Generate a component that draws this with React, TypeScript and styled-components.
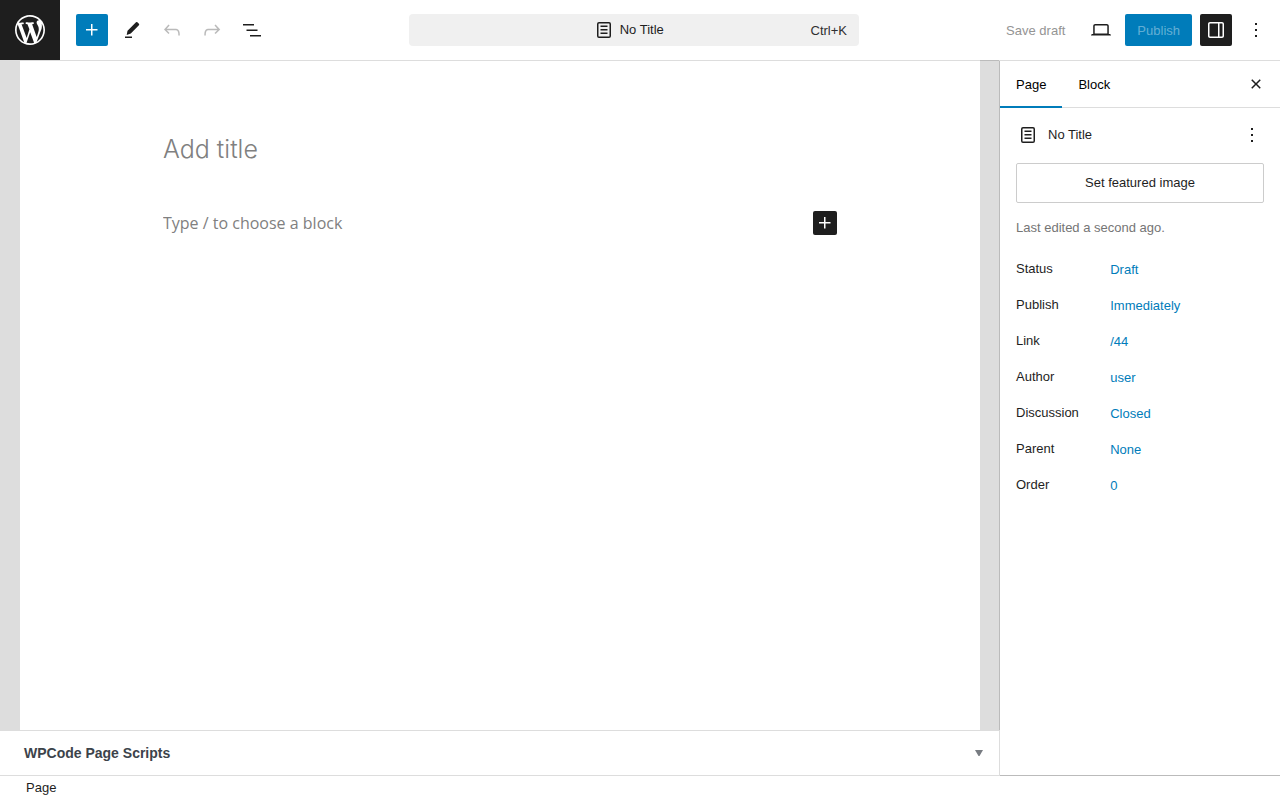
import React from "react";
import styled, { createGlobalStyle } from "styled-components";

const ink = "#1e1e1e";
const blue = "#007cba";
const line = "#dddddd";
const edge = "#bbbbbb";

const GlobalStyle = createGlobalStyle`
  *, *::before, *::after { box-sizing: border-box; }
  body {
    margin: 0;
    background: #fff;
    color: ${ink};
    font: 13px/20px "Liberation Sans", Arial, sans-serif;
  }
  button, input { font: inherit; color: inherit; }
`;

const paths = {
  plus: "M11 12.5V17.5H12.5V12.5H17.5V11H12.5V6H11V11H6V12.5H11Z",
  edit: "M16 4.3a1 1 0 0 1 1.4 0l1.5 1.5a1 1 0 0 1 0 1.4L10.8 15.5 6.7 16.9 7.5 12.7ZM12 18.5H5V20h7v-1.5Z",
  undo: "M18.3 11.7c-.6-.6-1.4-.9-2.3-.9H6.7l2.9-3.3-1.1-1-4.5 5L8.5 16l1-1-2.7-2.7H16c.5 0 .9.2 1.3.5 1 1 1 3.4 1 4.5v.3h1.5v-.2c0-1.5 0-4.3-1.5-5.7z",
  redo: "M15.6 6.5l-1.1 1 2.9 3.3H8c-.9 0-1.7.3-2.3.9-1.4 1.5-1.4 4.2-1.4 5.6v.2h1.5v-.3c0-1.1 0-3.5 1-4.5.3-.3.7-.5 1.3-.5h9.2L14.5 15l1.1 1.1 4.6-4.6-4.6-5z",
  listView: "M3 6h11v1.5H3V6Zm3.5 5.5h11V13h-11v-1.5ZM21 17H10v1.5h11V17Z",
  page: "M15.5 7.5h-7V9h7V7.5Zm-7 3.5h7v1.5h-7V11Zm7 3.5h-7V16h7v-1.5Z M17 4H7a2 2 0 0 0-2 2v12a2 2 0 0 0 2 2h10a2 2 0 0 0 2-2V6a2 2 0 0 0-2-2ZM7 5.5h10a.5.5 0 0 1 .5.5v12a.5.5 0 0 1-.5.5H7a.5.5 0 0 1-.5-.5V6a.5.5 0 0 1 .5-.5Z",
  desktop: "M20.5 16h-.7V8c0-1.1-.9-2-2-2H6.2c-1.1 0-2 .9-2 2v8h-.7c-.8 0-1.5.7-1.5 1.5h20c0-.8-.7-1.5-1.5-1.5zM5.7 8c0-.3.2-.5.5-.5h11.6c.3 0 .5.2.5.5v7.6H5.7V8z",
  drawer: "M18 4H6c-1.1 0-2 .9-2 2v12c0 1.1.9 2 2 2h12c1.1 0 2-.9 2-2V6c0-1.1-.9-2-2-2zm-4 14.5H6c-.3 0-.5-.2-.5-.5V6c0-.3.2-.5.5-.5h8v13zm4.5-.5c0 .3-.2.5-.5.5h-2.5v-13H18c.3 0 .5.2.5.5v12z",
  more: "M13 19h-2v-2h2v2zm0-6h-2v-2h2v2zm0-6h-2V5h2v2z",
  close: "M12 13.06l3.712 3.713 1.061-1.06L13.061 12l3.712-3.712-1.06-1.06L12 10.938 8.288 7.227l-1.061 1.06L10.939 12l-3.712 3.712 1.06 1.061L12 13.061z",
};

const Icon = ({ name }: { name: keyof typeof paths }) => (
  <svg width="24" height="24" viewBox="0 0 24 24" fill="currentColor" fillRule="evenodd" aria-hidden="true">
    <path d={paths[name]} />
  </svg>
);

const WordPressLogo = () => (
  <svg width="36" height="36" viewBox="-2 -2 24 24" fill="currentColor" aria-hidden="true">
    <path d="M20 10c0-5.51-4.49-10-10-10C4.48 0 0 4.49 0 10c0 5.52 4.48 10 10 10 5.51 0 10-4.48 10-10zM7.78 15.37L4.37 6.22c.55-.02 1.17-.08 1.17-.08.5-.06.44-1.13-.06-1.11 0 0-1.45.11-2.37.11-.18 0-.37 0-.58-.01C4.12 2.69 6.87 1.11 10 1.11c2.33 0 4.45.87 6.05 2.34-.68-.11-1.65.39-1.65 1.58 0 .74.45 1.36.9 2.1.35.61.55 1.36.55 2.46 0 1.49-1.4 5-1.4 5l-3.03-8.37c.54-.02.82-.17.82-.17.5-.05.44-1.25-.06-1.22 0 0-1.44.12-2.38.12-.87 0-2.33-.12-2.33-.12-.5-.03-.56 1.2-.06 1.22l.92.08 1.26 3.41zM17.41 10c.24-.64.74-1.87.43-4.25.7 1.29 1.05 2.71 1.05 4.25 0 3.29-1.73 6.24-4.4 7.78.97-2.59 1.94-5.2 2.92-7.78zM6.1 18.09C3.12 16.65 1.11 13.53 1.11 10c0-1.3.23-2.48.72-3.59C3.25 10.3 4.67 14.2 6.1 18.09zm4.03-6.63l2.58 6.98c-.86.29-1.76.45-2.71.45-.79 0-1.57-.11-2.29-.33.81-2.38 1.62-4.74 2.42-7.1z" />
  </svg>
);

const Shell = styled.div`
  display: flex;
  flex-direction: column;
  min-height: 100vh;
`;

const Header = styled.header`
  display: grid;
  grid-template-columns: 1fr minmax(0, 450px) 1fr;
  align-items: center;
  padding-right: 12px;
  border-bottom: 1px solid ${line};
`;

const HeaderStart = styled.div`
  display: flex;
  align-items: center;
  gap: 16px;
`;

const HomeLink = styled.a`
  display: flex;
  align-items: center;
  justify-content: center;
  width: 60px;
  height: 60px;
  background: ${ink};
  color: #fff;
`;

const Tools = styled.div`
  display: flex;
  align-items: center;
  gap: 8px;
`;

const HeaderEnd = styled(Tools)`
  justify-content: flex-end;
  margin-right: -4px;
`;

const tones = {
  plain: { bg: "transparent", fg: ink },
  primary: { bg: blue, fg: "#fff" },
  dark: { bg: ink, fg: "#fff" },
};

const IconButton = styled.button<{ $tone?: keyof typeof tones; $size?: number }>`
  display: flex;
  align-items: center;
  justify-content: center;
  flex: none;
  width: ${(p) => p.$size ?? 32}px;
  height: ${(p) => p.$size ?? 32}px;
  padding: 0;
  border: 0;
  border-radius: 2px;
  background: ${(p) => tones[p.$tone ?? "plain"].bg};
  color: ${(p) => tones[p.$tone ?? "plain"].fg};
  &:disabled { opacity: 0.3; }
`;

const TextButton = styled.button<{ $primary?: boolean }>`
  height: 32px;
  padding: 2px 12px 0;
  border: 0;
  border-radius: 2px;
  white-space: nowrap;
  background: ${(p) => (p.$primary ? blue : "transparent")};
  color: ${(p) => (p.$primary ? "rgba(255, 255, 255, 0.4)" : "#949494")};
`;

const CommandBar = styled.button`
  display: flex;
  align-items: center;
  gap: 12px;
  height: 32px;
  padding: 0 12px 0 48px;
  border: 0;
  border-radius: 4px;
  background: #f0f0f0;
`;

const CommandTitle = styled.span`
  display: flex;
  flex: 1;
  align-items: center;
  justify-content: center;
  gap: 4px;
`;

const Shortcut = styled.kbd`
  padding-top: 2px;
  font: inherit;
  color: #2f2f2f;
`;

const Body = styled.div`
  display: flex;
  flex: 1;
`;

const Main = styled.main`
  display: flex;
  flex: 1;
  flex-direction: column;
  min-width: 0;
  border-bottom: 1px solid ${line};
`;

const Stage = styled.div`
  display: flex;
  flex: 1;
  padding-left: 20px;
  background: ${line};
  border-right: 1px solid ${edge};
`;

const Gutter = styled.div`
  width: 19px;
  margin-top: -1px;
  border-top: 1px solid ${edge};
`;

const Canvas = styled.div`
  flex: 1;
  min-width: 0;
  padding: 68px 20px 40px;
  background: #fff;
`;

const Post = styled.div`
  display: flex;
  flex-direction: column;
  gap: 42px;
  max-width: 674px;
  margin: 0 auto;
`;

const Field = styled.input`
  display: block;
  flex: 1;
  min-width: 0;
  padding: 0;
  border: 0;
  outline: 0;
  background: transparent;
  font-family: "Open Sans", "Liberation Sans", sans-serif;
  font-size: 16px;
  line-height: 24px;
  &::placeholder { color: #808080; opacity: 1; }
`;

const TitleField = styled(Field)`
  font-family: Inter, "Liberation Sans", sans-serif;
  font-size: 25px;
  font-weight: 300;
  line-height: 40px;
`;

const BlockRow = styled.div`
  display: flex;
  align-items: center;
`;

const MetaBox = styled.button`
  display: flex;
  align-items: center;
  justify-content: space-between;
  height: 45px;
  padding: 0 16px 0 24px;
  border: solid ${line};
  border-width: 1px 1px 0 0;
  background: #fff;
  text-align: left;
`;

const MetaTitle = styled.span`
  font-size: 14px;
  font-weight: 700;
  color: #3c434a;
`;

const Sidebar = styled.aside`
  flex: none;
  width: 280px;
  border-bottom: 1px solid ${edge};
`;

const TabBar = styled.div`
  display: flex;
  align-items: center;
  height: 47px;
  padding-right: 8px;
  border-bottom: 1px solid ${line};
`;

const TabList = styled.div`
  display: flex;
  flex: 1;
  align-self: flex-start;
`;

const Tab = styled.button<{ $active?: boolean }>`
  height: 47px;
  padding: 2px 16px 0;
  border: 0;
  border-bottom: 2px solid ${(p) => (p.$active ? blue : "transparent")};
  background: transparent;
  color: #000;
`;

const Panel = styled.div`
  display: flex;
  flex-direction: column;
  gap: 16px;
  padding: 15px 16px;
`;

const Card = styled.div`
  display: flex;
  align-items: center;
  gap: 8px;
`;

const CardTitle = styled.h2`
  flex: 1;
  margin: 0;
  font-size: 13px;
  font-weight: 400;
`;

const FeaturedButton = styled.button`
  height: 40px;
  padding: 0 12px;
  border: 1px solid #cccccc;
  border-radius: 2px;
  background: #fff;
`;

const Note = styled.p`
  margin: -1px 0 0;
  color: #757575;
`;

const Settings = styled.dl`
  display: flex;
  flex-direction: column;
  gap: 4px;
  margin: 0;
`;

const Setting = styled.div`
  display: flex;
  height: 32px;
`;

const SettingName = styled.dt`
  width: 38%;
  line-height: 30px;
`;

const SettingValue = styled.dd`
  margin: 0;
`;

const ValueButton = styled.button`
  height: 32px;
  padding: 0;
  border: 0;
  background: transparent;
  color: ${blue};
`;

const Footer = styled.footer`
  height: 24px;
  padding: 2px 26px;
`;

const settings = [
  ["Status", "Draft"],
  ["Publish", "Immediately"],
  ["Link", "/44"],
  ["Author", "user"],
  ["Discussion", "Closed"],
  ["Parent", "None"],
  ["Order", "0"],
];

export default function App() {
  return (
    <Shell>
      <GlobalStyle />
      <Header>
        <HeaderStart>
          <HomeLink href="#" aria-label="View Pages"><WordPressLogo /></HomeLink>
          <Tools>
            <IconButton $tone="primary" aria-label="Block Inserter"><Icon name="plus" /></IconButton>
            <IconButton aria-label="Tools"><Icon name="edit" /></IconButton>
            <IconButton aria-label="Undo" disabled><Icon name="undo" /></IconButton>
            <IconButton aria-label="Redo" disabled><Icon name="redo" /></IconButton>
            <IconButton aria-label="Document Overview"><Icon name="listView" /></IconButton>
          </Tools>
        </HeaderStart>
        <CommandBar>
          <CommandTitle>
            <Icon name="page" />
            <span>No Title</span>
          </CommandTitle>
          <Shortcut>Ctrl+K</Shortcut>
        </CommandBar>
        <HeaderEnd>
          <TextButton disabled>Save draft</TextButton>
          <IconButton aria-label="View"><Icon name="desktop" /></IconButton>
          <TextButton $primary disabled>Publish</TextButton>
          <IconButton $tone="dark" aria-label="Settings"><Icon name="drawer" /></IconButton>
          <IconButton aria-label="Options"><Icon name="more" /></IconButton>
        </HeaderEnd>
      </Header>
      <Body>
        <Main>
          <Stage>
            <Canvas>
              <Post>
                <TitleField aria-label="Add title" placeholder="Add title" />
                <BlockRow>
                  <Field aria-label="Block text" placeholder="Type / to choose a block" />
                  <IconButton $tone="dark" $size={24} aria-label="Add block"><Icon name="plus" /></IconButton>
                </BlockRow>
              </Post>
            </Canvas>
            <Gutter />
          </Stage>
          <MetaBox aria-expanded="false">
            <MetaTitle>WPCode Page Scripts</MetaTitle>
            <svg width="8" height="6" viewBox="0 0 8 6" fill="#787c82" aria-hidden="true">
              <path d="M0 0h8L4.5 6h-1z" />
            </svg>
          </MetaBox>
        </Main>
        <Sidebar>
          <TabBar>
            <TabList role="tablist">
              <Tab $active role="tab" aria-selected="true">Page</Tab>
              <Tab role="tab" aria-selected="false">Block</Tab>
            </TabList>
            <IconButton aria-label="Close Settings"><Icon name="close" /></IconButton>
          </TabBar>
          <Panel>
            <Card>
              <Icon name="page" />
              <CardTitle>No Title</CardTitle>
              <IconButton $size={24} aria-label="Actions"><Icon name="more" /></IconButton>
            </Card>
            <FeaturedButton>Set featured image</FeaturedButton>
            <Note>Last edited a second ago.</Note>
            <Settings>
              {settings.map(([name, value]) => (
                <Setting key={name}>
                  <SettingName>{name}</SettingName>
                  <SettingValue><ValueButton aria-label={`${name}: ${value}`}>{value}</ValueButton></SettingValue>
                </Setting>
              ))}
            </Settings>
          </Panel>
        </Sidebar>
      </Body>
      <Footer>Page</Footer>
    </Shell>
  );
}
